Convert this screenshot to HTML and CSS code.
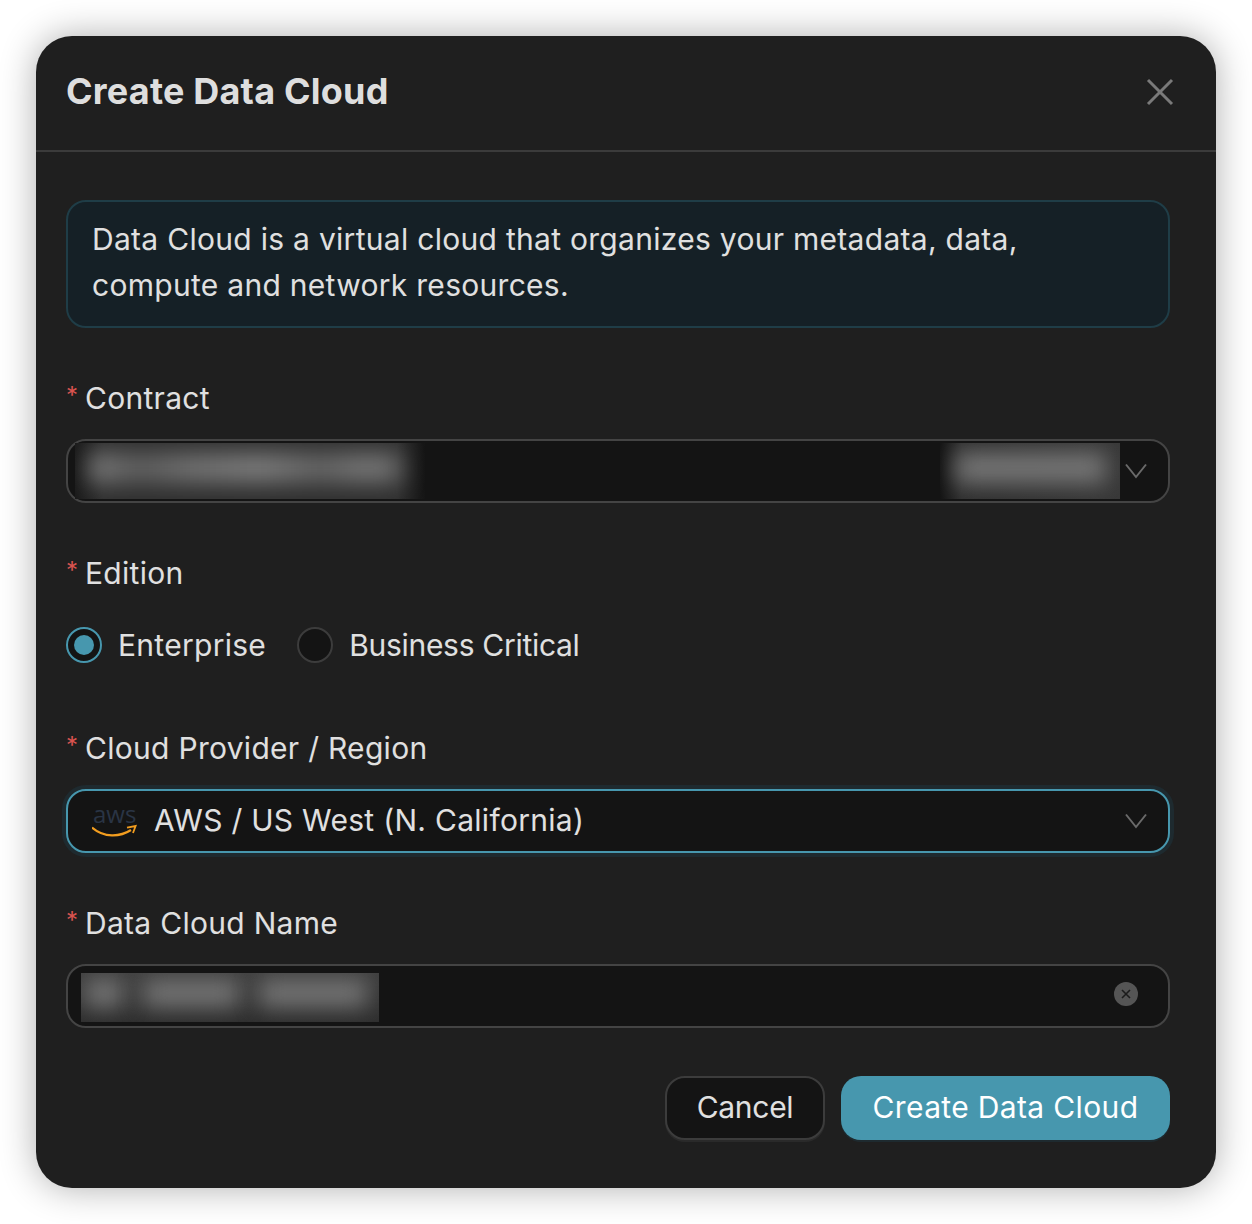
FILE: index.html
```html
<!DOCTYPE html>
<html lang="en">
<head>
<meta charset="utf-8">
<title>Create Data Cloud</title>
<link rel="stylesheet" href="styles.css">
</head>
<body>
<div class="modal">
  <header class="modal-header">
    <h1 class="modal-title">Create Data Cloud</h1>
    <button class="close" type="button" aria-label="Close">
      <svg width="28" height="28" viewBox="0 0 28 28"><path d="M2 2L26 26M26 2L2 26" stroke="#7a7a7a" stroke-width="3" fill="none"/></svg>
    </button>
  </header>
  <div class="modal-body">
    <div class="info">Data Cloud is a virtual cloud that organizes your metadata, data, compute and network resources.</div>

    <div class="field">
      <div class="label"><span class="req">*</span>Contract</div>
      <div class="control contract">
        <div class="smudge smudge-a"><i class="bar bar-a1"></i></div>
        <div class="smudge smudge-b"><i class="bar bar-b1"></i></div>
        <svg class="chev" width="22" height="16" viewBox="0 0 22 16"><path d="M1 1.5L11 14L21 1.5" stroke="#6a6a6a" stroke-width="2" fill="none"/></svg>
      </div>
    </div>

    <div class="field">
      <div class="label"><span class="req">*</span>Edition</div>
      <div class="radios">
        <label class="radio"><span class="dot on"></span>Enterprise</label>
        <label class="radio tight"><span class="dot"></span>Business Critical</label>
      </div>
    </div>

    <div class="field">
      <div class="label"><span class="req">*</span>Cloud Provider / Region</div>
      <div class="control focused">
        <svg class="aws" width="48" height="56" viewBox="0 -12 48 56">
          <text x="1" y="18" class="aws-text">aws</text>
          <path d="M0 22.5C12 33 28 32 39 25" stroke="#f29d1f" stroke-width="2.2" fill="none"/>
          <path d="M35 22.7L43.6 21L41 28" stroke="#f29d1f" stroke-width="1.8" fill="none"/>
        </svg>
        <span class="value">AWS / US West (N. California)</span>
        <svg class="chev" width="22" height="16" viewBox="0 0 22 16"><path d="M1 1.5L11 14L21 1.5" stroke="#6a6a6a" stroke-width="2" fill="none"/></svg>
      </div>
    </div>

    <div class="field">
      <div class="label"><span class="req">*</span>Data Cloud Name</div>
      <div class="control name">
        <div class="smudge smudge-c"><i class="bar bar-c1"></i><i class="bar bar-c2"></i><i class="bar bar-c3"></i></div>
        <span class="clear"><svg width="12" height="12" viewBox="0 0 12 12"><path d="M2 2L10 10M10 2L2 10" stroke="#1c1c1c" stroke-width="1.6" fill="none"/></svg></span>
      </div>
    </div>

    <div class="actions">
      <button class="btn btn-ghost" type="button">Cancel</button>
      <button class="btn btn-primary" type="button">Create Data Cloud</button>
    </div>
  </div>
</div>
</body>
</html>
```
FILE: styles.css
```css
* { box-sizing: border-box; }
html, body { margin: 0; padding: 0; background: #fff; }
body {
  padding: 36px;
  font-family: Inter, "Liberation Sans", sans-serif;
  color: #e0e0e0;
  letter-spacing: .29px;
}
.modal {
  width: 1180px;
  height: 1152px;
  background: #1f1f1f;
  border-radius: 36px;
  box-shadow: 0 0 36px rgba(0, 0, 0, .32);
  overflow: hidden;
}
.modal-header {
  height: 116px;
  padding: 0 42px 0 30px;
  display: flex;
  align-items: center;
  justify-content: space-between;
  border-bottom: 2px solid #3b3b3b;
}
.modal-title {
  margin: 0 0 4px;
  font-size: 36px;
  font-weight: 700;
  letter-spacing: .2px;
  color: #dedede;
}
.close { background: none; border: 0; padding: 0; display: flex; margin-bottom: 2px; }
.modal-body { padding: 48px 46px 48px 30px; }
.info {
  height: 128px;
  padding: 14px 120px 18px 24px;
  background: #152026;
  border: 2px solid #1f3d47;
  border-radius: 20px;
  font-size: 30px;
  line-height: 46px;
}
.field { margin-top: 48px; }
.label {
  height: 44px;
  margin-bottom: 19px;
  display: flex;
  align-items: center;
  font-size: 30px;
}
.req {
  color: #d9534f;
  font-size: 24px;
  width: 19px;
  margin-top: -6px;
}
.control {
  position: relative;
  height: 64px;
  display: flex;
  align-items: center;
  padding: 0 21px 0 24px;
  background: #141414;
  border: 2px solid #444;
  border-radius: 20px;
  font-size: 30px;
}
.focused {
  border-color: #4797ae;
  box-shadow: 0 0 0 4px #1e2a2f;
}
.value { padding-bottom: 2px; }
.chev { margin-left: auto; flex: none; }
.aws { flex: none; margin-right: 14px; }
.aws-text { font-family: "Open Sans", sans-serif; font-size: 24px; letter-spacing: 0; fill: #2a3445; }
.smudge {
  position: absolute;
  top: 2px;
  height: 56px;
  overflow: hidden;
}
.bar {
  position: absolute;
  display: block;
  background: #747474;
  filter: blur(11px);
}
.smudge-a { left: 7px; width: 350px; background: linear-gradient(90deg, #1a1a1a, #303030 8%, #303030 92%, #151515); }
.bar-a1 {
  left: 14px;
  right: 24px;
  top: 10px;
  height: 30px;
  background: linear-gradient(90deg, #7a7a7a, #5e5e5e 16%, #707070 32%, #7c7c7c 55%, #646464 74%, #777 90%, #666);
}
.smudge-b { left: 872px; width: 180px; background: linear-gradient(90deg, #141414, #2f2f2f 12%, #383838); }
.bar-b1 { left: 16px; right: 14px; top: 9px; height: 32px; }
.smudge-c { left: 13px; top: 7px; width: 298px; height: 49px; background: linear-gradient(#3e3e3e, #2e2e2e); }
.bar-c1 { left: 4px; width: 38px; top: 6px; height: 28px; }
.bar-c2 { left: 62px; width: 96px; top: 6px; height: 28px; }
.bar-c3 { left: 178px; width: 108px; top: 6px; height: 28px; }
.clear {
  position: absolute;
  right: 30px;
  top: 16px;
  width: 24px;
  height: 24px;
  border-radius: 50%;
  background: #555;
  display: flex;
  align-items: center;
  justify-content: center;
}
.radios { height: 65px; padding-bottom: 1px; margin-top: -1px; display: flex; align-items: center; gap: 31px; font-size: 30px; }
.radio { display: flex; align-items: center; gap: 16px; }
.radio.tight { letter-spacing: -.29px; }
.dot {
  width: 36px;
  height: 36px;
  border-radius: 50%;
  background: #141414;
  border: 2px solid #3c3c3c;
  display: flex;
  align-items: center;
  justify-content: center;
}
.dot.on { border-color: #4797ae; }
.dot.on::after {
  content: "";
  width: 20px;
  height: 20px;
  border-radius: 50%;
  background: #4797ae;
}
.actions { margin-top: 48px; display: flex; justify-content: flex-end; gap: 16px; }
.btn {
  height: 64px;
  padding: 0 0 2px;
  border-radius: 20px;
  font: inherit;
  font-size: 30px;
}
.btn-ghost {
  width: 160px;
  letter-spacing: -.3px;
  background: #141414;
  color: #e0e0e0;
  border: 2px solid #3c3c3c;
  box-shadow: 0 2px 0 #2a2a2a;
}
.btn-primary {
  width: 329px;
  letter-spacing: .35px;
  background: #4797ae;
  color: #fff;
  border: 0;
  box-shadow: 0 2px 0 #1e2a2f;
}
```
